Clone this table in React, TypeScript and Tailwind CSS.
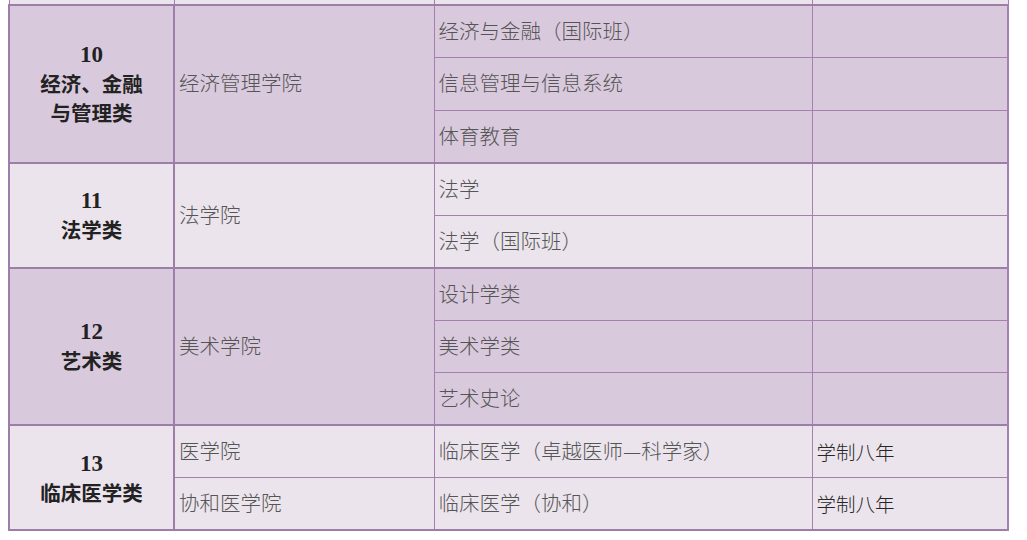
import React from "react";

type Group = {
  no: string;
  name: string[];
  dark: boolean;
  rows: { college?: string; span?: number; major: string; note?: string }[];
};

const groups: Group[] = [
  {
    no: "10",
    name: ["经济、金融", "与管理类"],
    dark: true,
    rows: [
      { college: "经济管理学院", span: 3, major: "经济与金融（国际班）" },
      { major: "信息管理与信息系统" },
      { major: "体育教育" },
    ],
  },
  {
    no: "11",
    name: ["法学类"],
    dark: false,
    rows: [
      { college: "法学院", span: 2, major: "法学" },
      { major: "法学（国际班）" },
    ],
  },
  {
    no: "12",
    name: ["艺术类"],
    dark: true,
    rows: [
      { college: "美术学院", span: 3, major: "设计学类" },
      { major: "美术学类" },
      { major: "艺术史论" },
    ],
  },
  {
    no: "13",
    name: ["临床医学类"],
    dark: false,
    rows: [
      { college: "医学院", span: 1, major: "临床医学（卓越医师—科学家）", note: "学制八年" },
      { college: "协和医学院", span: 1, major: "临床医学（协和）", note: "学制八年" },
    ],
  },
];

const cell = "border border-[#a47fb0] px-[4px] align-middle text-left";

const App = () => {
  return (
    <div
      className="w-[1027px] h-[540px] bg-white overflow-hidden"
      style={{ fontFamily: '"Noto Sans CJK SC", "Liberation Serif", serif' }}
    >
      <table className="ml-[8px] w-[999px] border-collapse table-fixed text-[20.5px] text-[#555] font-light">
        <colgroup>
          <col className="w-[165px]" />
          <col className="w-[260px]" />
          <col className="w-[378px]" />
          <col className="w-[196px]" />
        </colgroup>
        <tbody className="bg-[#ebe4ec] border-b-2 border-[#9d7ea8]">
          <tr className="h-[5px]">
            <td className="border-x border-[#a47fb0] p-0" />
            <td className="border-x border-[#a47fb0] p-0" />
            <td className="border-x border-[#a47fb0] p-0" />
            <td className="border-x border-[#a47fb0] p-0" />
          </tr>
        </tbody>
        {groups.map((g) => (
          <tbody
            key={g.no}
            className={`border-y-2 border-[#9d7ea8] ${g.dark ? "bg-[#d9c9dd]" : "bg-[#ebe4ec]"}`}
          >
            {g.rows.map((r, i) => (
              <tr key={i} className="h-[52.5px]">
                {i === 0 && (
                  <td
                    rowSpan={g.rows.length}
                    className="border-x-2 border-[#9d7ea8] text-center align-middle text-[#222] font-bold leading-[29px]"
                  >
                    <div
                      className="text-[23px]"
                      style={{ fontFamily: '"Liberation Serif", serif' }}
                    >
                      {g.no}
                    </div>
                    {g.name.map((n) => (
                      <div key={n} className="text-[20.5px]">
                        {n}
                      </div>
                    ))}
                  </td>
                )}
                {r.college && (
                  <td rowSpan={r.span} className={cell}>
                    <span className="relative -top-[1px]">{r.college}</span>
                  </td>
                )}
                <td className={cell}>
                  <span className="relative -top-[1px]">{r.major}</span>
                </td>
                <td className={`${cell} border-r-2 text-[#262626] text-[19.5px] font-light`}>
                  {r.note}
                </td>
              </tr>
            ))}
          </tbody>
        ))}
      </table>
    </div>
  );
};

export default App;
